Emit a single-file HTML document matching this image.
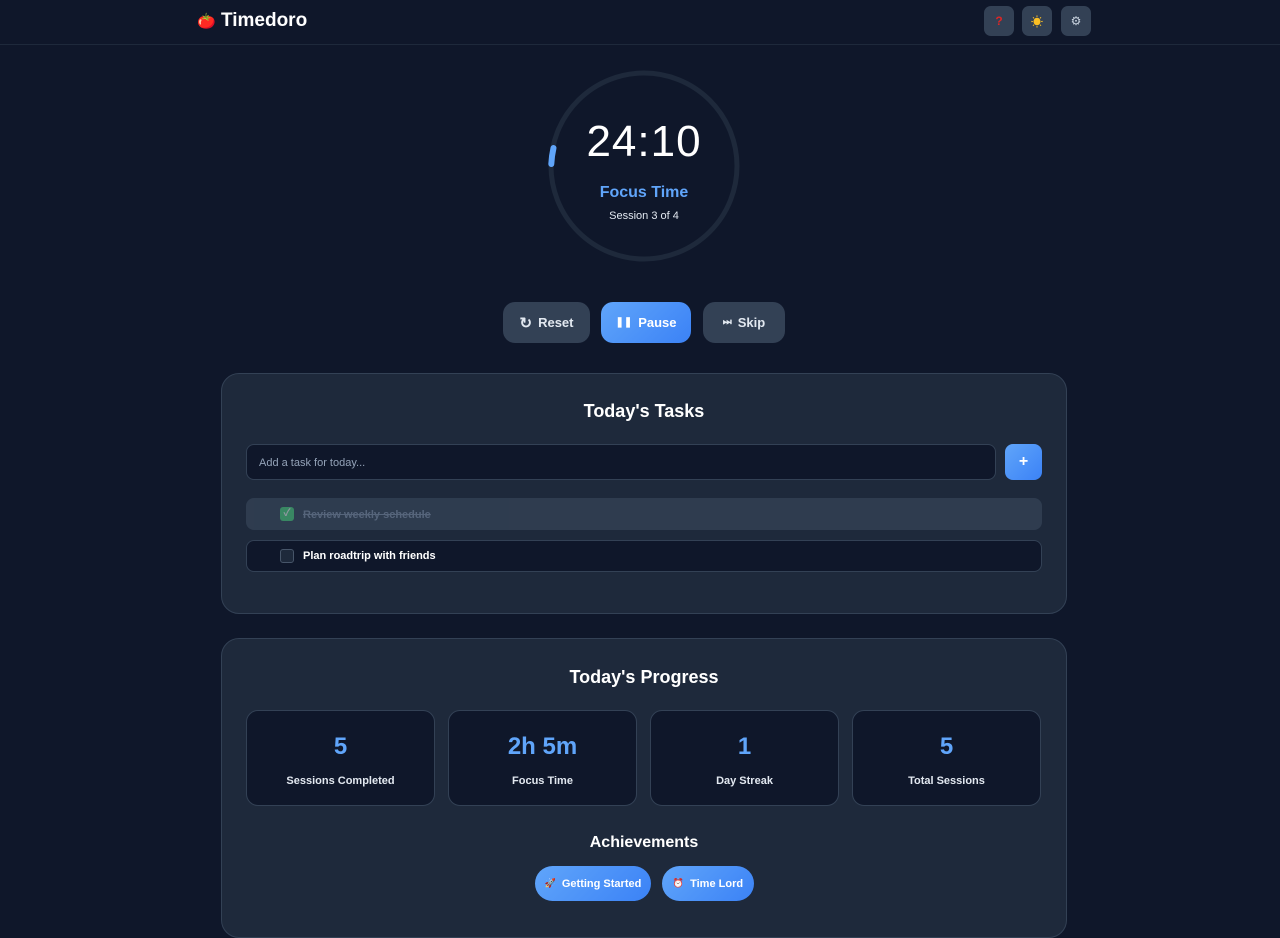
<!DOCTYPE html>
<html><head><meta charset="utf-8"><style>
*{box-sizing:border-box;margin:0;padding:0}
body{width:1280px;height:921px;overflow:hidden;background:#0f172a;font-family:"Liberation Sans","Noto Sans CJK JP",sans-serif;color:#fff;position:relative}
.abs{position:absolute}
.hdr{left:0;top:0;width:1280px;height:45px;border-bottom:1px solid #1e293b}
.logo{left:197px;top:10px;font-size:19px;font-weight:bold}
.ib{width:30px;height:30px;top:6px;background:#334155;border-radius:7px;font-size:12px;display:flex;align-items:center;justify-content:center}
.btn{top:302px;height:41px;border-radius:12px;background:#334155;display:flex;align-items:center;justify-content:center;font-size:13px;font-weight:bold;color:#e2e8f0;gap:6px}
.blue{background:linear-gradient(135deg,#60a5fa,#3b82f6);color:#fff}
.card{left:221px;width:846px;background:#1e293b;border:1px solid #334155;border-radius:18px}
h2{font-size:18px;text-align:center;font-weight:bold}
.task{left:246px;width:796px;height:32px;border-radius:8px;font-size:11px;font-weight:bold}
.cb{position:absolute;left:34px;top:9px;width:14px;height:14px;border-radius:3px}
.stat{top:710px;width:189px;height:96px;background:#0f172a;border:1px solid #334155;border-radius:12px;text-align:center}
.stat b{display:block;color:#60a5fa;font-size:24px;margin-top:22px;height:28px}
.stat span{display:block;font-size:11px;font-weight:bold;color:#e2e8f0;margin-top:14px}
.badge{top:866px;height:35px;border-radius:18px;background:linear-gradient(135deg,#60a5fa,#3b82f6);font-size:11px;font-weight:bold;display:flex;align-items:center;justify-content:center;gap:6px}
</style></head><body>
<div class="abs hdr"></div>
<div class="abs logo"><span style="font-size:15px">🍅</span> Timedoro</div>
<div class="abs ib" style="left:984px;color:#dc2626;font-weight:bold">?</div>
<div class="abs ib" style="left:1022px;color:#fbbf24">☀</div>
<div class="abs ib" style="left:1061px;color:#cbd5e1">⚙</div>

<svg class="abs" style="left:544px;top:66px" width="200" height="200">
<circle cx="100" cy="100" r="93" fill="none" stroke="#1e293b" stroke-width="5"/>
<path d="M7.3 98 A93 93 0 0 1 9.5 82" fill="none" stroke="#60a5fa" stroke-width="6" stroke-linecap="round"/>
</svg>
<div class="abs" style="left:544px;width:200px;top:117px;text-align:center;font-size:44px;line-height:50px;letter-spacing:1px">24:10</div>
<div class="abs" style="left:544px;width:200px;top:184px;text-align:center;font-size:16px;font-weight:bold;color:#60a5fa">Focus Time</div>
<div class="abs" style="left:544px;width:200px;top:210px;text-align:center;font-size:11px;color:#e2e8f0">Session 3 of 4</div>

<div class="abs btn" style="left:503px;width:87px"><span style="font-size:15px">↻</span>Reset</div>
<div class="abs btn blue" style="left:601px;width:90px"><span style="font-size:10px">❚❚</span>Pause</div>
<div class="abs btn" style="left:703px;width:82px"><span style="font-size:10px">⏭</span>Skip</div>

<div class="abs card" style="top:373px;height:241px"></div>
<h2 class="abs" style="left:221px;width:846px;top:401px">Today's Tasks</h2>
<div class="abs" style="left:246px;top:444px;width:750px;height:36px;background:#0f172a;border:1px solid #334155;border-radius:8px;font-size:11px;color:#94a3b8;padding:12px 12px">Add a task for today...</div>
<div class="abs blue" style="left:1005px;top:444px;width:37px;height:36px;border-radius:8px;display:flex;align-items:center;justify-content:center;font-weight:bold">+</div>
<div class="abs task" style="top:498px;background:#334155;opacity:.8"><div class="cb" style="background:#4ade80;opacity:.6;color:#fff;font-size:10px;text-align:center;line-height:14px">✓</div><span style="position:absolute;left:57px;top:11px;color:#64748b;text-decoration:line-through">Review weekly schedule</span></div>
<div class="abs task" style="top:540px;background:#0f172a;border:1px solid #334155"><div class="cb" style="background:#1e293b;border:1px solid #475569;top:8px;left:33px"></div><span style="position:absolute;left:56px;top:9px">Plan roadtrip with friends</span></div>

<div class="abs card" style="top:638px;height:300px"></div>
<h2 class="abs" style="left:221px;width:846px;top:667px">Today's Progress</h2>
<div class="abs stat" style="left:246px"><b>5</b><span>Sessions Completed</span></div>
<div class="abs stat" style="left:448px"><b>2h 5m</b><span>Focus Time</span></div>
<div class="abs stat" style="left:650px"><b>1</b><span>Day Streak</span></div>
<div class="abs stat" style="left:852px"><b>5</b><span>Total Sessions</span></div>
<div class="abs" style="left:221px;width:846px;top:834px;text-align:center;font-size:16px;font-weight:bold">Achievements</div>
<div class="abs badge" style="left:535px;width:116px"><span style="font-size:9px">🚀</span>Getting Started</div>
<div class="abs badge" style="left:662px;width:92px"><span style="font-size:9px">⏰</span>Time Lord</div>
</body></html>
